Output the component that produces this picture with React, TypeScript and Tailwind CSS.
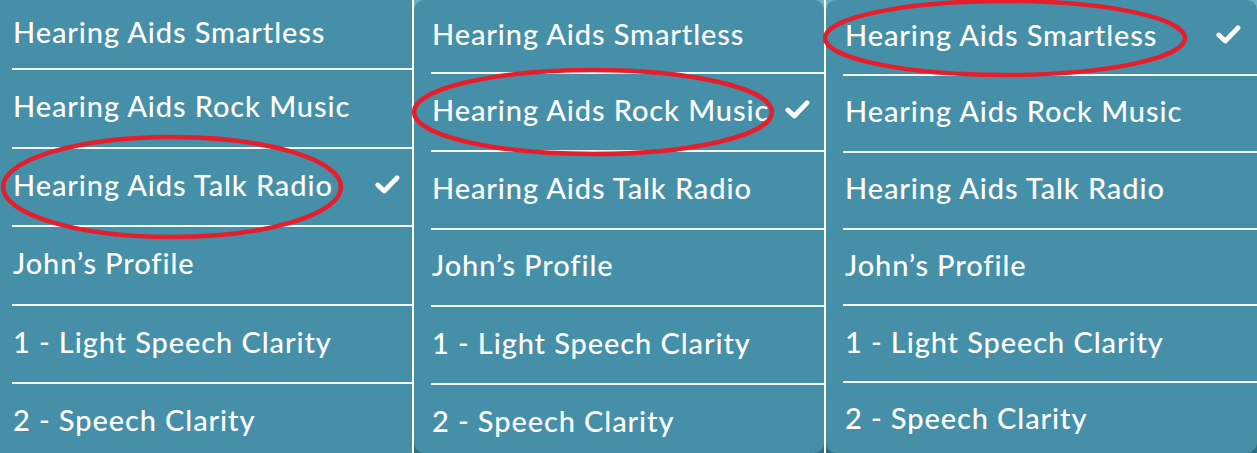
const items = [
  "Hearing Aids Smartless",
  "Hearing Aids Rock Music",
  "Hearing Aids Talk Radio",
  "John’s Profile",
  "1 - Light Speech Clarity",
  "2 - Speech Clarity",
];

function Check() {
  return (
    <svg width="25" height="19" viewBox="0 0 25 19" className="shrink-0">
      <path d="M2.8 10 L9.3 16 L22 2.8" fill="none" stroke="white" strokeWidth="4.8" strokeLinecap="round" strokeLinejoin="round" />
    </svg>
  );
}

type PanelProps = {
  width: string;
  first: string;
  row: string;
  pad: string;
  checkPad: string;
  checked: number;
};

function Panel({ width, first, row, pad, checkPad, checked }: PanelProps) {
  return (
    <div className={`${width} h-full shrink-0 bg-gradient-to-b from-[#68b4c2] via-[#4590a8] to-[#2e6e80]`}>
      <div className="h-full overflow-hidden rounded-[10px] bg-[#4590a8]">
        {items.map((label, i) => (
          <div key={label}>
            {i > 0 && <div className={`h-[2px] bg-white/95 ${pad}`} />}
            <div className={`flex items-center justify-between pb-[5px] ${i === 0 ? first : row} ${checkPad}`}>
              <span className="text-[29px] font-medium leading-none tracking-[0.9px] text-white">{label}</span>
              {i === checked && <Check />}
            </div>
          </div>
        ))}
      </div>
    </div>
  );
}

export default function App() {
  return (
    <div className="relative flex h-[453px] w-[1257px] overflow-hidden bg-white" style={{ fontFamily: "Lato, 'Noto Sans', sans-serif" }}>
      <div className="h-full w-[412px] shrink-0 bg-[#4590a8]">
        {items.map((label, i) => (
          <div key={label}>
            {i > 0 && <div className="ml-[12px] h-[2px] bg-white/95" />}
            <div className={`flex items-center justify-between pb-[5px] pl-[13px] pr-[12px] ${i === 0 ? "h-[68px]" : "h-[76.5px]"}`}>
              <span className="text-[29px] font-medium leading-none tracking-[0.9px] text-white">{label}</span>
              {i === 2 && <Check />}
            </div>
          </div>
        ))}
      </div>
      <div className="w-[2px] shrink-0 bg-white" />
      <Panel width="w-[410px]" first="h-[72px]" row="h-[75.75px]" pad="ml-[17px]" checkPad="pl-[18px] pr-[14px]" checked={1} />
      <div className="w-[2px] shrink-0 bg-white" />
      <Panel width="w-[431px]" first="h-[74px]" row="h-[74.75px]" pad="ml-[17px]" checkPad="pl-[19px] pr-[16px]" checked={0} />
      <svg className="pointer-events-none absolute left-0 top-0" width="1257" height="453" viewBox="0 0 1257 453">
        <g fill="none" stroke="#e61e2b" strokeWidth="4.5">
          <ellipse cx="172" cy="187" rx="169" ry="50" />
          <ellipse cx="593" cy="112" rx="179" ry="42" />
          <ellipse cx="1005" cy="38" rx="180" ry="37" />
        </g>
      </svg>
    </div>
  );
}
